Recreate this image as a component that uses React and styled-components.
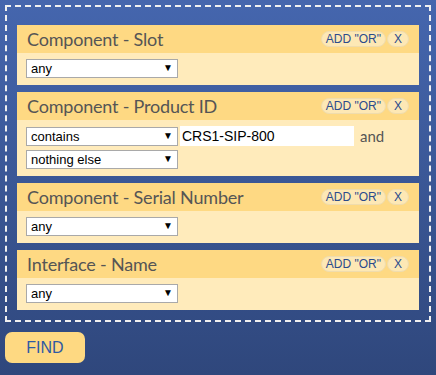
import React from 'react';
import styled, { createGlobalStyle } from 'styled-components';

const GlobalStyle = createGlobalStyle`
  html, body {
    margin: 0;
    padding: 0;
  }
  body {
    min-height: 375px;
    background: linear-gradient(180deg, #4566ae 0%, #2f477c 100%);
    font-family: "Liberation Sans", Arial, sans-serif;
  }
`;

const Page = styled.div`
  padding: 5px;
`;

const Frame = styled.div`
  border: 2px dashed #f0f0f0;
  padding: 18px 10px 10px;
  display: flex;
  flex-direction: column;
  gap: 7px;
`;

const Card = styled.div`
  background: #ffebbb;
`;

const Header = styled.div`
  height: 28px;
  background: #fed983;
  display: flex;
  align-items: center;
  justify-content: space-between;
  padding: 0 10px;
`;

const Title = styled.h3`
  margin: 0;
  font-family: Lato, "Open Sans", sans-serif;
  font-weight: 400;
  font-size: 18px;
  letter-spacing: -0.2px;
  color: #555;
`;

const Actions = styled.div`
  display: flex;
  gap: 1px;
`;

const Pill = styled.button`
  height: 16px;
  padding: 0 ${(p) => (p.$narrow ? '6px' : '4px')};
  border: 1px solid #efdcae;
  border-radius: 8px;
  background: #fde8b5;
  color: #2b4b8c;
  font-family: "Liberation Sans", Arial, sans-serif;
  font-size: 12px;
  line-height: 14px;
  cursor: pointer;
`;

const Body = styled.div`
  padding: 6px 9px 7px;
  display: flex;
  flex-direction: column;
  gap: 4px;
`;

const Row = styled.div`
  display: flex;
  align-items: center;
  gap: 2px;
`;

const SelectWrap = styled.div`
  position: relative;
  width: 152px;
  height: 19px;
`;

const Select = styled.select`
  appearance: none;
  width: 100%;
  height: 100%;
  margin: 0;
  padding: 0 0 0 4px;
  border: 1px solid #a9a9a9;
  border-radius: 0;
  background: #fff;
  color: #000;
  font-family: "Liberation Sans", Arial, sans-serif;
  font-size: 13px;
  outline: none;
`;

const Arrow = styled.span`
  position: absolute;
  right: 5px;
  top: 3px;
  font-size: 10px;
  line-height: 12px;
  color: #000;
  pointer-events: none;
`;

const TextInput = styled.input`
  width: 174px;
  height: 20px;
  box-sizing: border-box;
  margin: 0;
  padding: 0 2px;
  border: none;
  background: #fff;
  color: #000;
  font-family: "Liberation Sans", Arial, sans-serif;
  font-size: 14px;
  outline: none;
`;

const Conj = styled.span`
  margin-left: 4px;
  font-family: Lato, "Open Sans", sans-serif;
  font-size: 15px;
  color: #555;
`;

const FindButton = styled.button`
  margin-top: 10px;
  width: 80px;
  height: 31px;
  border: none;
  border-radius: 7px;
  background: #fed982;
  color: #2f5aa3;
  font-family: "Liberation Sans", Arial, sans-serif;
  font-size: 16px;
  cursor: pointer;
`;

const Dropdown = ({ value, options }) => (
  <SelectWrap>
    <Select defaultValue={value}>
      {options.map((o) => (
        <option key={o}>{o}</option>
      ))}
    </Select>
    <Arrow>▼</Arrow>
  </SelectWrap>
);

const filters = [
  { title: 'Component - Slot', kind: 'any' },
  { title: 'Component - Product ID', kind: 'text', value: 'CRS1-SIP-800' },
  { title: 'Component - Serial Number', kind: 'any' },
  { title: 'Interface - Name', kind: 'any' },
];

const App = () => (
  <Page>
    <GlobalStyle />
    <Frame>
      {filters.map((f) => (
        <Card key={f.title}>
          <Header>
            <Title>{f.title}</Title>
            <Actions>
              <Pill>ADD "OR"</Pill>
              <Pill $narrow>X</Pill>
            </Actions>
          </Header>
          <Body>
            {f.kind === 'text' ? (
              <>
                <Row>
                  <Dropdown value="contains" options={['contains', 'equals', 'starts with']} />
                  <TextInput defaultValue={f.value} />
                  <Conj>and</Conj>
                </Row>
                <Dropdown value="nothing else" options={['nothing else', 'or', 'and']} />
              </>
            ) : (
              <Dropdown value="any" options={['any']} />
            )}
          </Body>
        </Card>
      ))}
    </Frame>
    <FindButton>FIND</FindButton>
  </Page>
);

export default App;
